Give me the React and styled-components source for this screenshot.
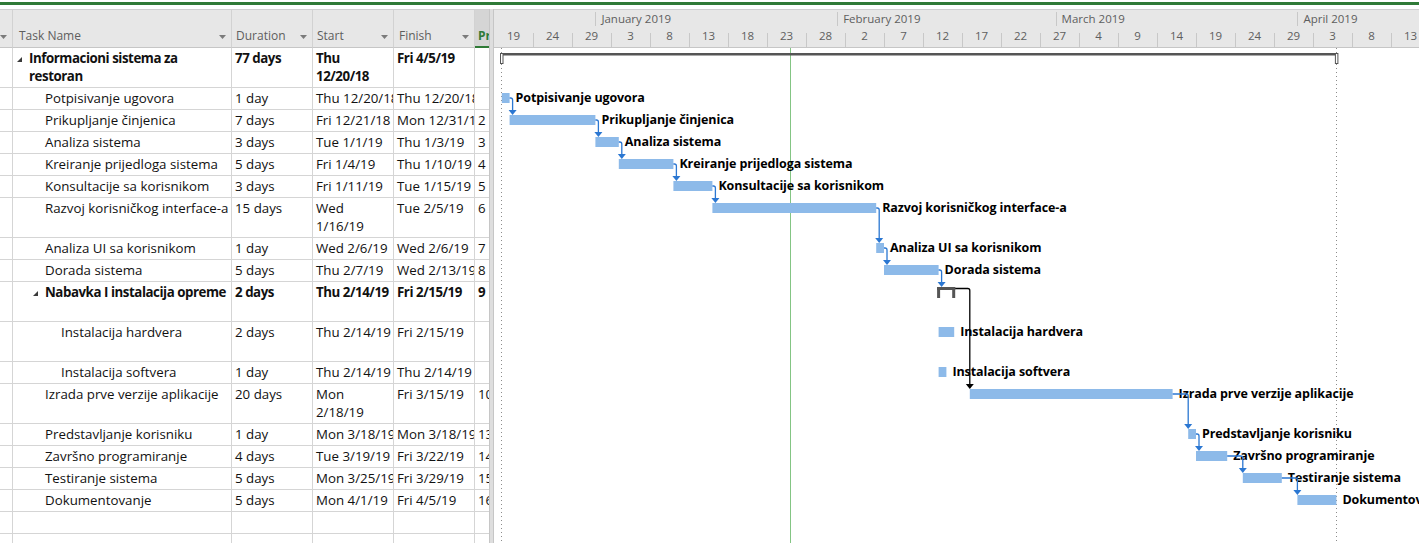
import React from 'react';
import styled, { createGlobalStyle, css } from 'styled-components';

const GlobalStyle = createGlobalStyle`
  html, body {
    margin: 0;
    padding: 0;
    background: #fff;
  }
  body {
    font-family: "Open Sans", "Noto Sans", sans-serif;
    overflow: hidden;
  }
`;

// one day on the chart, in px; day 0 is Wed 12/19/18
const DAY = 7.8;
const dx = (d) => d * DAY;
const COLS = '13px 219px 81px 81px 81px 14px';

const tasks = [
  { name: 'Informacioni sistema za\nrestoran', level: 0, summary: true, dur: '77 days', start: 'Thu\n12/20/18', finish: 'Fri 4/5/19', pred: '', h: 40, bar: [1, 108], kind: 'project' },
  { name: 'Potpisivanje ugovora', level: 1, dur: '1 day', start: 'Thu 12/20/18', finish: 'Thu 12/20/18', pred: '', bar: [1, 2] },
  { name: 'Prikupljanje činjenica', level: 1, dur: '7 days', start: 'Fri 12/21/18', finish: 'Mon 12/31/18', pred: '2', bar: [2, 13] },
  { name: 'Analiza sistema', level: 1, dur: '3 days', start: 'Tue 1/1/19', finish: 'Thu 1/3/19', pred: '3', bar: [13, 16] },
  { name: 'Kreiranje prijedloga sistema', level: 1, dur: '5 days', start: 'Fri 1/4/19', finish: 'Thu 1/10/19', pred: '4', bar: [16, 23] },
  { name: 'Konsultacije sa korisnikom', level: 1, dur: '3 days', start: 'Fri 1/11/19', finish: 'Tue 1/15/19', pred: '5', bar: [23, 28] },
  { name: 'Razvoj korisničkog interface-a', level: 1, dur: '15 days', start: 'Wed\n1/16/19', finish: 'Tue 2/5/19', pred: '6', h: 40, bar: [28, 49] },
  { name: 'Analiza UI sa korisnikom', level: 1, dur: '1 day', start: 'Wed 2/6/19', finish: 'Wed 2/6/19', pred: '7', bar: [49, 50] },
  { name: 'Dorada sistema', level: 1, dur: '5 days', start: 'Thu 2/7/19', finish: 'Wed 2/13/19', pred: '8', bar: [50, 57] },
  { name: 'Nabavka I instalacija opreme', level: 1, summary: true, dur: '2 days', start: 'Thu 2/14/19', finish: 'Fri 2/15/19', pred: '9', h: 40, bar: [57, 59], kind: 'summary' },
  { name: 'Instalacija hardvera', level: 2, dur: '2 days', start: 'Thu 2/14/19', finish: 'Fri 2/15/19', pred: '', h: 40, bar: [57, 59] },
  { name: 'Instalacija softvera', level: 2, dur: '1 day', start: 'Thu 2/14/19', finish: 'Thu 2/14/19', pred: '', bar: [57, 58] },
  { name: 'Izrada prve verzije aplikacije', level: 1, dur: '20 days', start: 'Mon\n2/18/19', finish: 'Fri 3/15/19', pred: '10', h: 40, bar: [61, 87] },
  { name: 'Predstavljanje korisniku', level: 1, dur: '1 day', start: 'Mon 3/18/19', finish: 'Mon 3/18/19', pred: '13', bar: [89, 90] },
  { name: 'Završno programiranje', level: 1, dur: '4 days', start: 'Tue 3/19/19', finish: 'Fri 3/22/19', pred: '14', bar: [90, 94] },
  { name: 'Testiranje sistema', level: 1, dur: '5 days', start: 'Mon 3/25/19', finish: 'Fri 3/29/19', pred: '15', bar: [96, 101] },
  { name: 'Dokumentovanje', level: 1, dur: '5 days', start: 'Mon 4/1/19', finish: 'Fri 4/5/19', pred: '16', bar: [103, 108] },
  { name: '', dur: '', start: '', finish: '', pred: '', empty: true },
  { name: '', dur: '', start: '', finish: '', pred: '', empty: true },
];

// row tops inside the chart body
const rowTops = [];
tasks.reduce((y, t) => {
  rowTops.push(y);
  return y + (t.h || 22);
}, 0);

const links = [
  [1, 2], [2, 3], [3, 4], [4, 5], [5, 6], [6, 7], [7, 8], [8, 9],
  [9, 12], [12, 13], [13, 14], [14, 15], [15, 16],
];

const days = ['19', '24', '29', '3', '8', '13', '18', '23', '28', '2', '7', '12', '17', '22', '27', '4', '9', '14', '19', '24', '29', '3', '8', '13'];
const months = [
  { label: '', days: 13 },
  { label: 'January 2019', days: 31 },
  { label: 'February 2019', days: 28 },
  { label: 'March 2019', days: 31 },
  { label: 'April 2019', days: 30 },
];

const Page = styled.div`
  width: 1419px;
  height: 543px;
  display: flex;
  flex-direction: column;
  overflow: hidden;
  background: #fff;
`;

const TopStrip = styled.div`
  height: 9px;
  flex: none;
  padding-top: 2px;
  box-sizing: border-box;
`;

const GreenRule = styled.div`
  height: 3px;
  background: #2f7a37;
`;

const Main = styled.div`
  flex: 1;
  display: flex;
  min-height: 0;
`;

const TablePane = styled.div`
  width: 489px;
  flex: none;
  display: flex;
  flex-direction: column;
  overflow: hidden;
`;

const HeaderRow = styled.div`
  display: grid;
  grid-template-columns: ${COLS};
  height: 39px;
  flex: none;
  box-sizing: border-box;
  border-top: 1px solid #d0d0d0;
  background: #e7e7e7;
`;

const HeaderCell = styled.div`
  display: flex;
  align-items: flex-end;
  justify-content: space-between;
  box-sizing: border-box;
  padding: 0 5px 3px ${(p) => p.$pl ?? 4}px;
  border-right: 1px solid #d2d2d2;
  border-bottom: 1px solid #c6c6c6;
  color: #5e5e5e;
  font-size: 12px;
  line-height: 16px;
  white-space: nowrap;
  overflow: hidden;

  ${(p) => p.$active && css`
    background: #d5d5d5;
    border-right: none;
    border-bottom: 2px solid #2f7a37;
    padding: 0 0 2px 3px;
    color: #2f7a37;
    font-weight: 700;
  `}
`;

const DropArrow = styled.svg`
  flex: none;
  width: 7px;
  height: 4px;
  margin-bottom: 5px;
  fill: #7b7b7b;
`;

const Rows = styled.div`
  flex: 1;
  overflow: hidden;
`;

const Row = styled.div`
  display: grid;
  grid-template-columns: ${COLS};
  height: ${(p) => p.$h}px;
  font-weight: ${(p) => (p.$bold ? 700 : 400)};
  letter-spacing: ${(p) => (p.$bold ? '-0.45px' : 'normal')};
`;

const Cell = styled.div`
  box-sizing: border-box;
  border-right: 1px solid #d5d5d5;
  border-bottom: 1px solid #d5d5d5;
  padding: 1px 0 0 3px;
  font-size: 13.3px;
  line-height: 18px;
  white-space: pre;
  overflow: hidden;
  color: #111;

  &:last-child {
    border-right: none;
  }
`;

const NameCell = styled(Cell)`
  display: flex;
  padding-left: ${(p) => p.$pl}px;
`;

const Toggle = styled.span`
  flex: none;
  width: 12px;
  height: 18px;
  display: flex;
  align-items: center;
  padding-top: 2px;
  box-sizing: border-box;
`;

const Splitter = styled.div`
  width: 5px;
  flex: none;
  box-sizing: border-box;
  background: #dedede;
  border-left: 1px solid #c6c6c6;
  border-right: 1px solid #c6c6c6;
`;

const ChartPane = styled.div`
  flex: 1;
  min-width: 0;
  display: flex;
  flex-direction: column;
  overflow: hidden;
`;

const Timescale = styled.div`
  height: 39px;
  flex: none;
  box-sizing: border-box;
  border-top: 1px solid #d0d0d0;
  border-bottom: 1px solid #c6c6c6;
  background: #e7e7e7;
  display: flex;
  flex-direction: column;
  color: #5e5e5e;
  font-size: 11.5px;
  white-space: nowrap;
`;

const Tier = styled.div`
  display: flex;
  height: ${(p) => p.$h}px;
  line-height: ${(p) => p.$lh}px;
  overflow: hidden;
`;

const MonthCell = styled.div`
  flex: none;
  position: relative;
  box-sizing: border-box;
  padding-left: 6px;

  &::before {
    content: '';
    display: ${(p) => (p.$sep ? 'block' : 'none')};
    position: absolute;
    left: 0;
    top: 2px;
    bottom: 1px;
    width: 1px;
    background: #c8c8c8;
  }
`;

const DayCell = styled.div`
  flex: none;
  width: 39px;
  text-align: center;
  position: relative;

  &::before {
    content: '';
    display: ${(p) => (p.$sep ? 'block' : 'none')};
    position: absolute;
    left: 0;
    bottom: 0;
    height: 14px;
    width: 1px;
    background: #c8c8c8;
  }
`;

const ChartBody = styled.svg`
  display: block;
  flex: 1;
  width: 100%;
  font-family: "Open Sans", "Noto Sans", sans-serif;
`;

const BarLabel = styled.text`
  font-size: 12.5px;
  font-weight: 700;
  letter-spacing: -0.1px;
  fill: #000;
`;

const BLUE = '#2b77d2';
const BAR = '#8dbae9';
const DARK = '#555';

function ArrowDown() {
  return (
    <DropArrow viewBox="0 0 7 4">
      <polygon points="0,0 7,0 3.5,4" />
    </DropArrow>
  );
}

function TaskRow({ t }) {
  const pl = t.summary ? 4 + 16 * t.level : 16 + 16 * (t.level || 0);
  return (
    <Row $h={t.h || 22} $bold={t.summary}>
      <Cell />
      <NameCell $pl={t.empty ? 3 : pl}>
        {t.summary && (
          <Toggle>
            <svg width="5" height="5" viewBox="0 0 5 5">
              <polygon points="5,0 5,5 0,5" fill="#3a3a3a" />
            </svg>
          </Toggle>
        )}
        <span>{t.name}</span>
      </NameCell>
      <Cell>{t.dur}</Cell>
      <Cell>{t.start}</Cell>
      <Cell>{t.finish}</Cell>
      <Cell>{t.pred}</Cell>
    </Row>
  );
}

function Link({ from, to }) {
  const a = tasks[from];
  const b = tasks[to];
  const summarySrc = a.kind === 'summary';
  const x1 = summarySrc ? dx(a.bar[1]) + 1 : dx(a.bar[1]);
  const y1 = summarySrc ? rowTops[from] + 6.5 : rowTops[from] + 10;
  const ax = Math.max(x1 + 3, dx(b.bar[0]));
  const ty = rowTops[to] + 5;
  const color = summarySrc ? '#000' : BLUE;
  return (
    <g>
      <path
        d={`M${x1} ${y1} H${ax - 2} Q${ax} ${y1} ${ax} ${y1 + 2} V${ty - 4}`}
        fill="none"
        stroke={color}
        strokeWidth="1.3"
      />
      <polygon points={`${ax - 4},${ty - 5} ${ax + 4},${ty - 5} ${ax},${ty}`} fill={color} />
    </g>
  );
}

function Bars() {
  return tasks.map((t, i) => {
    if (!t.bar) return null;
    const top = rowTops[i];
    const x0 = dx(t.bar[0]);
    const x1 = dx(t.bar[1]);
    if (t.kind === 'project') {
      return (
        <g key={i}>
          <rect x={x0 - 1.8} y={top + 5} width={x1 - x0 + 3.4} height={2.5} fill={DARK} />
          <rect x={x0 - 1.3} y={top + 5.5} width={2.5} height={10} fill="#fff" stroke={DARK} strokeWidth="1" />
          <rect x={x1 - 1} y={top + 5.5} width={2.5} height={10} fill="#fff" stroke={DARK} strokeWidth="1" />
        </g>
      );
    }
    if (t.kind === 'summary') {
      return (
        <g key={i} fill={DARK}>
          <rect x={x0 - 1.5} y={top + 5} width={x1 - x0 + 2.5} height={3} />
          <rect x={x0 - 1.5} y={top + 5} width={3} height={11} />
          <rect x={x1 - 2} y={top + 5} width={3} height={11} />
        </g>
      );
    }
    return (
      <g key={i}>
        <rect x={x0} y={top + 5} width={x1 - x0} height={10} fill={BAR} />
        <BarLabel x={x1 + 6} y={top + 14}>{t.name}</BarLabel>
      </g>
    );
  });
}

export default function App() {
  let acc = 0;
  return (
    <Page>
      <GlobalStyle />
      <TopStrip>
        <GreenRule />
      </TopStrip>
      <Main>
        <TablePane>
          <HeaderRow>
            <HeaderCell $pl={0}>
              <ArrowDown />
            </HeaderCell>
            <HeaderCell $pl={6}>
              <span>Task Name</span>
              <ArrowDown />
            </HeaderCell>
            <HeaderCell>
              <span>Duration</span>
              <ArrowDown />
            </HeaderCell>
            <HeaderCell>
              <span>Start</span>
              <ArrowDown />
            </HeaderCell>
            <HeaderCell $pl={5}>
              <span>Finish</span>
              <ArrowDown />
            </HeaderCell>
            <HeaderCell $active>
              <span>Predecessors</span>
            </HeaderCell>
          </HeaderRow>
          <Rows>
            {tasks.map((t, i) => (
              <TaskRow key={i} t={t} />
            ))}
          </Rows>
        </TablePane>
        <Splitter />
        <ChartPane>
          <Timescale>
            <Tier $h={17} $lh={18}>
              {months.map((m, i) => {
                const w = dx(m.days);
                const el = (
                  <MonthCell key={i} $sep={acc > 0} style={{ width: w }}>
                    {m.label}
                  </MonthCell>
                );
                acc += w;
                return el;
              })}
            </Tier>
            <Tier $h={20} $lh={18}>
              {days.map((d, i) => (
                <DayCell key={i} $sep={i > 0}>
                  {d}
                </DayCell>
              ))}
            </Tier>
          </Timescale>
          <ChartBody height="495">
            <line x1="296.5" y1="0" x2="296.5" y2="495" stroke="#84c584" strokeWidth="1" />
            <line x1="7.5" y1="0" x2="7.5" y2="495" stroke="#8c8c8c" strokeDasharray="1 3" />
            <line x1="842.5" y1="0" x2="842.5" y2="495" stroke="#8c8c8c" strokeDasharray="1 3" />
            <Bars />
            {links.map(([a, b]) => (
              <Link key={`${a}-${b}`} from={a} to={b} />
            ))}
          </ChartBody>
        </ChartPane>
      </Main>
    </Page>
  );
}
